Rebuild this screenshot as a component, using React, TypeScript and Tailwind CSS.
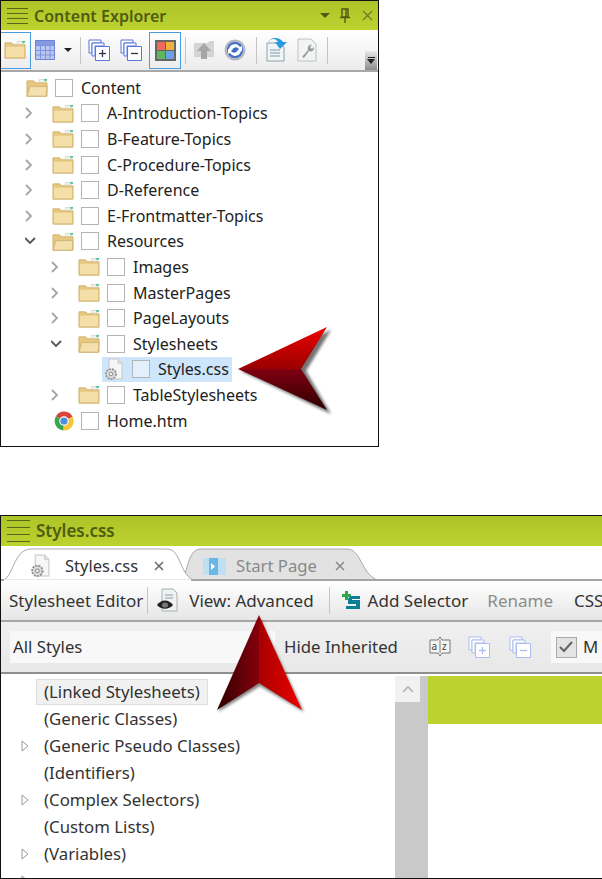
import type { ReactNode } from 'react';

const FONT = "font-['Noto_Sans',_'Open_Sans',_sans-serif]";

function Hamburger({ large = false }: { large?: boolean }) {
  const line = 'h-px bg-[#55651a]';
  return (
    <div className={large ? 'flex w-[23px] flex-col gap-[6px]' : 'flex w-[21px] flex-col gap-[4px]'}>
      <div className={line} />
      <div className={line} />
      <div className={line} />
      <div className={line} />
    </div>
  );
}

function TitleBar({ title, large = false, children }: { title: string; large?: boolean; children?: ReactNode }) {
  return (
    <div className={`flex shrink-0 items-center bg-gradient-to-b from-[#adc428] to-[#bcd22f] ${large ? 'h-[30px] pl-[6px]' : 'h-[29px] pl-[6px]'}`}>
      <Hamburger large={large} />
      <span className={`ml-[6px] font-semibold text-[#4d5c12] ${large ? 'text-[17px]' : 'text-[16px]'}`}>{title}</span>
      {children}
    </div>
  );
}

function Folder({ open = false, size = 22 }: { open?: boolean; size?: number }) {
  return (
    <svg width={size} height={size * 0.87} viewBox="0 0 23 20" className="shrink-0">
      <path d="M1 3h7l2 2h12v14H1z" fill="#e6c880" stroke="#d2b270" strokeWidth="1" />
      <path d="M14 1.5h6v3h-6z" fill="#f4f4e8" stroke="#c8c8b0" strokeWidth="0.6" />
      <path d="M19 1h3v2h-3z" fill="#5cc0a0" />
      {open ? (
        <path d="M1 19l3-10h18l-1 10z" fill="#f4e0ae" stroke="#d2b270" strokeWidth="1" />
      ) : (
        <path d="M2 7h19v11H2z" fill="#f4dfa8" />
      )}
    </svg>
  );
}

function Check() {
  return <div className="ml-[7px] size-[18px] shrink-0 border border-[#b4b4b4] bg-white/40" />;
}

function Chevron({ down = false }: { down?: boolean }) {
  return (
    <svg width="27" height="12" viewBox="0 0 27 12" className="shrink-0">
      {down ? (
        <path d="M0 3l5 5 5-5" fill="none" stroke="#555" strokeWidth="1.8" />
      ) : (
        <path d="M1 1l5 5-5 5" fill="none" stroke="#a6a6a6" strokeWidth="1.8" />
      )}
    </svg>
  );
}

function GearFile({ size = 20 }: { size?: number }) {
  return (
    <svg width={size} height={size * 1.15} viewBox="0 0 20 23" className="shrink-0">
      <path d="M5 1h9l4 4v16H5z" fill="#f6f6f6" stroke="#c6c6c6" />
      <path d="M14 1v4h4" fill="#e6e6e6" stroke="#c6c6c6" />
      <circle cx="7" cy="16" r="5" fill="#dcdcdc" stroke="#8c8c8c" strokeWidth="1.6" strokeDasharray="2 1" />
      <circle cx="7" cy="16" r="1.8" fill="#f6f6f6" stroke="#8c8c8c" />
    </svg>
  );
}

function Chrome() {
  return (
    <svg width="20" height="20" viewBox="0 0 21 21" className="shrink-0">
      <path d="M10.5 10.5L2 5.5A10 10 0 0 1 19.5 6z" fill="#d9453a" />
      <path d="M10.5 10.5L2 5.5A10 10 0 0 0 10 20.5z" fill="#3da650" />
      <path d="M10.5 10.5L19.5 6A10 10 0 0 1 10 20.5z" fill="#f5c63a" />
      <circle cx="10.5" cy="10.5" r="5" fill="#fff" />
      <circle cx="10.5" cy="10.5" r="3.8" fill="#4a8ee0" />
    </svg>
  );
}

function Copies({ sign, light = false }: { sign: '+' | '-'; light?: boolean }) {
  const c = light ? '#a9bdf0' : '#5577dd';
  return (
    <svg width="23" height="23" viewBox="0 0 23 23" className="shrink-0">
      <path d="M1 1h12v3H4v10H1z" fill="#fff" stroke={c} />
      <path d="M4 4h12v3H7v10H4z" fill="#fff" stroke={c} />
      <path d="M7.5 7.5h14v14h-14z" fill="#fff" stroke={c} />
      <path d="M11 14.5h7" stroke={light ? c : '#334'} strokeWidth="1.3" />
      {sign === '+' && <path d="M14.5 11v7" stroke={light ? c : '#334'} strokeWidth="1.3" />}
    </svg>
  );
}

function Sep({ h = 27 }: { h?: number }) {
  return <div className="w-px shrink-0 bg-[#c4c4c4]" style={{ height: h }} />;
}

function TopToolbar() {
  return (
    <div className="relative flex h-[42px] shrink-0 items-center border-b-2 border-[#a8a8a8] bg-gradient-to-b from-[#ffffff] to-[#ececec]">
      <div className="flex h-[37px] w-[30px] items-center justify-end border border-l-0 border-[#4a9be0] pr-[4px]">
        <Folder size={22} />
      </div>
      <svg width="20" height="20" viewBox="0 0 20 20" className="ml-[4px] shrink-0">
        <path d="M.5 .5h19v19H.5z" fill="#b9c6f0" stroke="#6a82d8" />
        <path d="M.5 5.5h19M.5 10.5h19M.5 15h19M5.5 5v15M10.5 5v15M15 5v15" stroke="#7d93e0" />
        <path d="M1 1h18v4H1z" fill="#8499df" />
      </svg>
      <div className="ml-[9px] size-0 border-x-4 border-t-4 border-x-transparent border-t-[#222]" />
      <div className="ml-[8px]"><Sep /></div>
      <div className="ml-[7px]"><Copies sign="+" /></div>
      <div className="ml-[9px]"><Copies sign="-" /></div>
      <div className="ml-[6px] flex h-[37px] w-[32px] items-center justify-center border border-[#4a9be0]">
        <svg width="21" height="21" viewBox="0 0 21 21">
          <path d="M0 0h21v21H0z" fill="#666" />
          <path d="M2 2h8v8H2z" fill="#ee6a5a" />
          <path d="M11 2h8v8h-8z" fill="#f2b13a" />
          <path d="M2 11h8v8H2z" fill="#5db85c" />
          <path d="M11 11h8v8h-8z" fill="#6aa0e8" />
        </svg>
      </div>
      <div className="ml-[4px]"><Sep /></div>
      <svg width="22" height="20" viewBox="0 0 22 20" className="ml-[7px] shrink-0">
        <path d="M1 3h13l3-2h4v16H1z" fill="#d4d4d4" />
        <path d="M11 3l7 8h-4v8H8v-8H4z" fill="#a6a6a6" />
      </svg>
      <svg width="22" height="22" viewBox="0 0 22 22" className="ml-[9px] shrink-0">
        <circle cx="11" cy="11" r="10.5" fill="#b4b8c4" />
        <circle cx="11" cy="11" r="8" fill="#3e6cc8" />
        <path d="M5 10a6 6 0 0 1 11-2l2-1v5h-5l2-2a4 4 0 0 0-7 1zM17 12a6 6 0 0 1-11 2l-2 1v-5h5l-2 2a4 4 0 0 0 7-1z" fill="#fff" />
      </svg>
      <div className="ml-[10px]"><Sep /></div>
      <svg width="21" height="24" viewBox="0 0 21 24" className="ml-[9px] shrink-0">
        <path d="M1 5h13l4 4v14H1z" fill="#f2f5f5" stroke="#8aa0a8" />
        <path d="M4 12h10M4 15h10M4 18h10" stroke="#7a98a8" />
        <path d="M2 5c2-5 8-5 10-1h-3l5 7 7-7h-4C14-1 4-2 2 5z" fill="#2a9ae0" />
      </svg>
      <svg width="20" height="24" viewBox="0 0 20 24" className="ml-[10px] shrink-0">
        <path d="M1 1h13l5 5v17H1z" fill="#f2f4f4" stroke="#b8c4c4" />
        <path d="M5 19l6-7a3.5 3.5 0 0 1 4-5l-2 2 2 2 2-2a3.5 3.5 0 0 1-5 4l-5 7z" fill="#9a9a9a" />
      </svg>
      <div className="ml-[10px]"><Sep /></div>
      <div className="ml-auto mr-[1px] flex h-[19px] w-[12px] flex-col items-center justify-center self-end bg-gradient-to-b from-[#e8e8e8] to-[#8c8c8c]">
        <div className="h-px w-[7px] bg-[#222]" />
        <div className="mt-px size-0 border-x-[4px] border-t-[5px] border-x-transparent border-t-[#222]" />
      </div>
    </div>
  );
}

type TreeRow = { label: string; indent: string; icon: ReactNode; chevron?: 'right' | 'down'; selected?: boolean };

const ROWS: TreeRow[] = [
  { label: 'Content', indent: 'pl-[25px]', icon: <Folder open /> },
  { label: 'A-Introduction-Topics', indent: 'pl-[24px]', chevron: 'right', icon: <Folder /> },
  { label: 'B-Feature-Topics', indent: 'pl-[24px]', chevron: 'right', icon: <Folder /> },
  { label: 'C-Procedure-Topics', indent: 'pl-[24px]', chevron: 'right', icon: <Folder /> },
  { label: 'D-Reference', indent: 'pl-[24px]', chevron: 'right', icon: <Folder /> },
  { label: 'E-Frontmatter-Topics', indent: 'pl-[24px]', chevron: 'right', icon: <Folder /> },
  { label: 'Resources', indent: 'pl-[24px]', chevron: 'down', icon: <Folder open /> },
  { label: 'Images', indent: 'pl-[50px]', chevron: 'right', icon: <Folder /> },
  { label: 'MasterPages', indent: 'pl-[50px]', chevron: 'right', icon: <Folder /> },
  { label: 'PageLayouts', indent: 'pl-[50px]', chevron: 'right', icon: <Folder /> },
  { label: 'Stylesheets', indent: 'pl-[50px]', chevron: 'down', icon: <Folder open /> },
  { label: 'Styles.css', indent: 'pl-[102px]', icon: <GearFile />, selected: true },
  { label: 'TableStylesheets', indent: 'pl-[50px]', chevron: 'right', icon: <Folder /> },
  { label: 'Home.htm', indent: 'pl-[53px]', icon: <Chrome /> },
];

function ExplorerRow({ row }: { row: TreeRow }) {
  return (
    <div className={`flex h-[25.6px] items-center ${row.indent}`}>
      {row.chevron === 'right' && <Chevron />}
      {row.chevron === 'down' && <Chevron down />}
      {row.selected ? (
        <div className="-ml-[1px] flex h-[25px] w-[130px] items-center bg-[#cde6fb] pl-[2px]">
          {row.icon}
          <div className="ml-[1px]"><Check /></div>
          <span className="ml-[8px] text-[16px] text-[#222]">{row.label}</span>
        </div>
      ) : (
        <>
          {row.icon}
          <Check />
          <span className="ml-[8px] text-[16px] text-[#222]">{row.label}</span>
        </>
      )}
    </div>
  );
}

function SideArrow() {
  return (
    <svg width="100" height="96" viewBox="0 0 100 96" className="absolute left-[236px] top-[324px]">
      <defs>
        <linearGradient id="a1" x1="0" y1="0" x2="0" y2="1">
          <stop offset="0" stopColor="#ee0000" />
          <stop offset="1" stopColor="#9a0000" />
        </linearGradient>
        <linearGradient id="a2" x1="0" y1="0" x2="0" y2="1">
          <stop offset="0" stopColor="#800010" />
          <stop offset="1" stopColor="#2e0000" />
        </linearGradient>
        <filter id="blur1"><feGaussianBlur stdDeviation="1.6" /></filter>
      </defs>
      <path d="M5 47L95 6 70 47 95 90z" fill="#000" opacity=".55" filter="url(#blur1)" />
      <path d="M2 45L91 3 65 45z" fill="url(#a1)" />
      <path d="M2 45L91 86 65 45z" fill="url(#a2)" />
    </svg>
  );
}

function UpArrow() {
  return (
    <svg width="96" height="104" viewBox="0 0 96 104" className="absolute left-[214px] top-[612px]">
      <defs>
        <linearGradient id="b1" x1="0" y1="0" x2="1" y2="0">
          <stop offset="0" stopColor="#2e0000" />
          <stop offset="1" stopColor="#85000c" />
        </linearGradient>
        <linearGradient id="b2" x1="0" y1="0" x2="1" y2="0">
          <stop offset="0" stopColor="#a80000" />
          <stop offset="1" stopColor="#ee0000" />
        </linearGradient>
        <filter id="blur2"><feGaussianBlur stdDeviation="1.6" /></filter>
      </defs>
      <path d="M4 100L46 6 90 100 46 74z" fill="#000" opacity=".5" filter="url(#blur2)" />
      <path d="M3 98L45 3V71z" fill="url(#b1)" />
      <path d="M88 98L45 3V71z" fill="url(#b2)" />
    </svg>
  );
}

function CloseX({ className }: { className: string }) {
  return (
    <svg width="10" height="10" viewBox="0 0 10 10" className={`shrink-0 ${className}`}>
      <path d="M1 1l8 8M9 1l-8 8" stroke="currentColor" strokeWidth="1.5" />
    </svg>
  );
}

function Tabs() {
  return (
    <div className="relative h-[35px] shrink-0 bg-white">
      <svg width="602" height="35" viewBox="0 0 602 35" className="absolute inset-0">
        <path d="M178 34C188 34 184 3 200 3H346C360 3 360 27 376 34z" fill="#e2e2e2" stroke="#a8a8a8" />
        <path d="M0 34H602" stroke="#a4a4a4" strokeWidth="2" />
        <path d="M1 34C12 34 12 3 30 3H166C180 3 178 27 192 34z" fill="#fff" stroke="#a8a8a8" />
        <path d="M3 34.5H190" stroke="#fff" strokeWidth="2" />
      </svg>
      <div className="relative flex h-full items-center pt-[5px]">
        <div className="ml-[29px]"><GearFile size={21} /></div>
        <span className="ml-[14px] text-[16.5px] text-[#333]">Styles.css</span>
        <CloseX className="ml-[16px] text-[#666]" />
        <svg width="23" height="17" viewBox="0 0 23 17" className="ml-[39px] shrink-0">
          <path d="M0 0h23v17H0z" fill="#bfe0f2" />
          <path d="M6 0h9v17H6z" fill="#6bb6e4" />
          <path d="M8 5l4 3.5L8 12z" fill="#fff" />
        </svg>
        <span className="ml-[10px] text-[16.7px] text-[#8a8a8a]">Start Page</span>
        <CloseX className="ml-[18px] text-[#888]" />
      </div>
    </div>
  );
}

function EditorToolbar() {
  return (
    <div className="flex h-[41px] shrink-0 items-center overflow-hidden border-b-2 border-[#a6a6a6] bg-gradient-to-b from-[#ffffff] to-[#e6e6e6] pl-[8px] text-[17px] whitespace-nowrap text-[#333]">
      <span>Stylesheet Editor</span>
      <div className="ml-[4px]"><Sep /></div>
      <svg width="23" height="25" viewBox="0 0 23 25" className="ml-[8px] shrink-0">
        <path d="M6 1h11l4 4v18H6z" fill="#eef2f2" stroke="#a8b0b0" />
        <path d="M9 7h8M9 10h8" stroke="#8ca0a8" />
        <path d="M1 17c4-6 12-6 16 0-4 5-12 5-16 0z" fill="#222" />
        <ellipse cx="9" cy="17" rx="3" ry="2.6" fill="#777" />
      </svg>
      <span className="ml-[10px]">View: Advanced</span>
      <div className="ml-[15px]"><Sep /></div>
      <svg width="20" height="19" viewBox="0 0 20 19" className="ml-[11px] shrink-0">
        <path d="M4 0h3v3h3v3H7v3H4V6H1V3h3z" fill="#2ea84a" />
        <path d="M9 5h10v3H11v1h8v9H5v-3h10v-2H7V8z" fill="#0a7f96" />
      </svg>
      <span className="ml-[7px]">Add Selector</span>
      <span className="ml-[19px] text-[#8c8c8c]">Rename</span>
      <span className="ml-[21px]">CSS</span>
    </div>
  );
}

function FilterBar() {
  return (
    <div className="flex h-[52px] shrink-0 items-center overflow-hidden border-b-2 border-[#8f8f8f] bg-gradient-to-b from-[#f0f0f0] to-[#e8e8e8] pl-[9px] text-[16.8px] whitespace-nowrap text-[#333]">
      <div className="flex h-[32px] w-[265px] shrink-0 items-center bg-[#f8f8f8] pl-[3px]">All Styles</div>
      <span className="ml-[9px] shrink-0">Hide Inherited</span>
      <svg width="24" height="24" viewBox="0 0 24 24" className="ml-[30px] shrink-0">
        <path d="M2 5h8l2-3 2 3h8v13h-8l-2 3-2-3H2z" fill="#f4f4f4" stroke="#777" />
        <path d="M12 5v13" stroke="#777" />
        <text x="3.5" y="15" fontSize="10" fill="#444">a</text>
        <text x="14" y="15" fontSize="10" fill="#444">z</text>
      </svg>
      <div className="ml-[16px]"><Copies sign="+" light /></div>
      <div className="ml-[18px]"><Copies sign="-" light /></div>
      <div className="ml-[19px] flex h-[32px] w-[60px] shrink-0 items-center bg-[#f8f8f8] pl-[5px]">
        <div className="flex size-[21px] shrink-0 items-center justify-center border border-[#aaa] bg-[#e4e4e4]">
          <svg width="14" height="12" viewBox="0 0 14 12">
            <path d="M1 6l4 4 8-9" fill="none" stroke="#666" strokeWidth="2.2" />
          </svg>
        </div>
        <span className="ml-[6px]">M</span>
      </div>
    </div>
  );
}

const STYLES = [
  { label: '(Linked Stylesheets)', arrow: false, active: true },
  { label: '(Generic Classes)', arrow: false },
  { label: '(Generic Pseudo Classes)', arrow: true },
  { label: '(Identifiers)', arrow: false },
  { label: '(Complex Selectors)', arrow: true },
  { label: '(Custom Lists)', arrow: false },
  { label: '(Variables)', arrow: true },
  { label: '', arrow: true },
];

function StyleTree() {
  return (
    <div className="flex min-h-0 flex-1 overflow-hidden">
      <div className="w-[394px] shrink-0 pt-[4px]">
        {STYLES.map((s, i) => (
          <div key={i} className="flex h-[27px] items-center pl-[20px]">
            <div className="w-[15px] shrink-0">
              {s.arrow && (
                <svg width="8" height="12" viewBox="0 0 8 12">
                  <path d="M1 1l6 5-6 5z" fill="#fff" stroke="#999" />
                </svg>
              )}
            </div>
            <div className={`flex h-[26px] items-center border px-[7px] text-[16.8px] text-[#333] ${s.active ? 'border-[#dedede] bg-[#f1f1f1]' : 'border-transparent'}`}>
              {s.label}
            </div>
          </div>
        ))}
      </div>
      <div className="mt-[2px] flex w-[33px] shrink-0 flex-col bg-[#c9c9c9]">
        <div className="flex h-[26px] w-[25px] items-center justify-center bg-[#f1f1f1]">
          <svg width="12" height="8" viewBox="0 0 12 8">
            <path d="M1 7l5-5 5 5" fill="none" stroke="#b4b4b4" strokeWidth="1.6" />
          </svg>
        </div>
      </div>
      <div className="flex-1 pt-[2px]">
        <div className="h-[48px] bg-[#bcd22f]" />
      </div>
    </div>
  );
}

export default function App() {
  return (
    <div className={`relative h-[879px] w-[602px] overflow-hidden bg-white ${FONT}`}>
      <div className="flex h-[447px] w-[379px] flex-col border border-[#111]">
        <TitleBar title="Content Explorer">
          <div className="ml-auto flex items-center pr-[5px]">
            <div className="size-0 border-x-[5px] border-t-[5px] border-x-transparent border-t-[#4d5c12]" />
            <svg width="12" height="16" viewBox="0 0 12 16" className="ml-[9px]">
              <path d="M3 1h6v8H3zM1 9.5h10M6 10v5M7 1v8" fill="none" stroke="#4d5c12" strokeWidth="1.4" />
            </svg>
            <svg width="11" height="11" viewBox="0 0 11 11" className="ml-[11px]">
              <path d="M1 1l9 9M10 1l-9 9" stroke="#6f7f2a" strokeWidth="1.4" />
            </svg>
          </div>
        </TitleBar>
        <TopToolbar />
        <div className="pt-[3px]">
          {ROWS.map((r) => (
            <ExplorerRow key={r.label} row={r} />
          ))}
        </div>
      </div>
      <div className="mt-[68px] flex h-[364px] w-[602px] flex-col border-y border-l border-[#111]">
        <TitleBar title="Styles.css" large />
        <Tabs />
        <EditorToolbar />
        <FilterBar />
        <StyleTree />
      </div>
      <SideArrow />
      <UpArrow />
    </div>
  );
}
